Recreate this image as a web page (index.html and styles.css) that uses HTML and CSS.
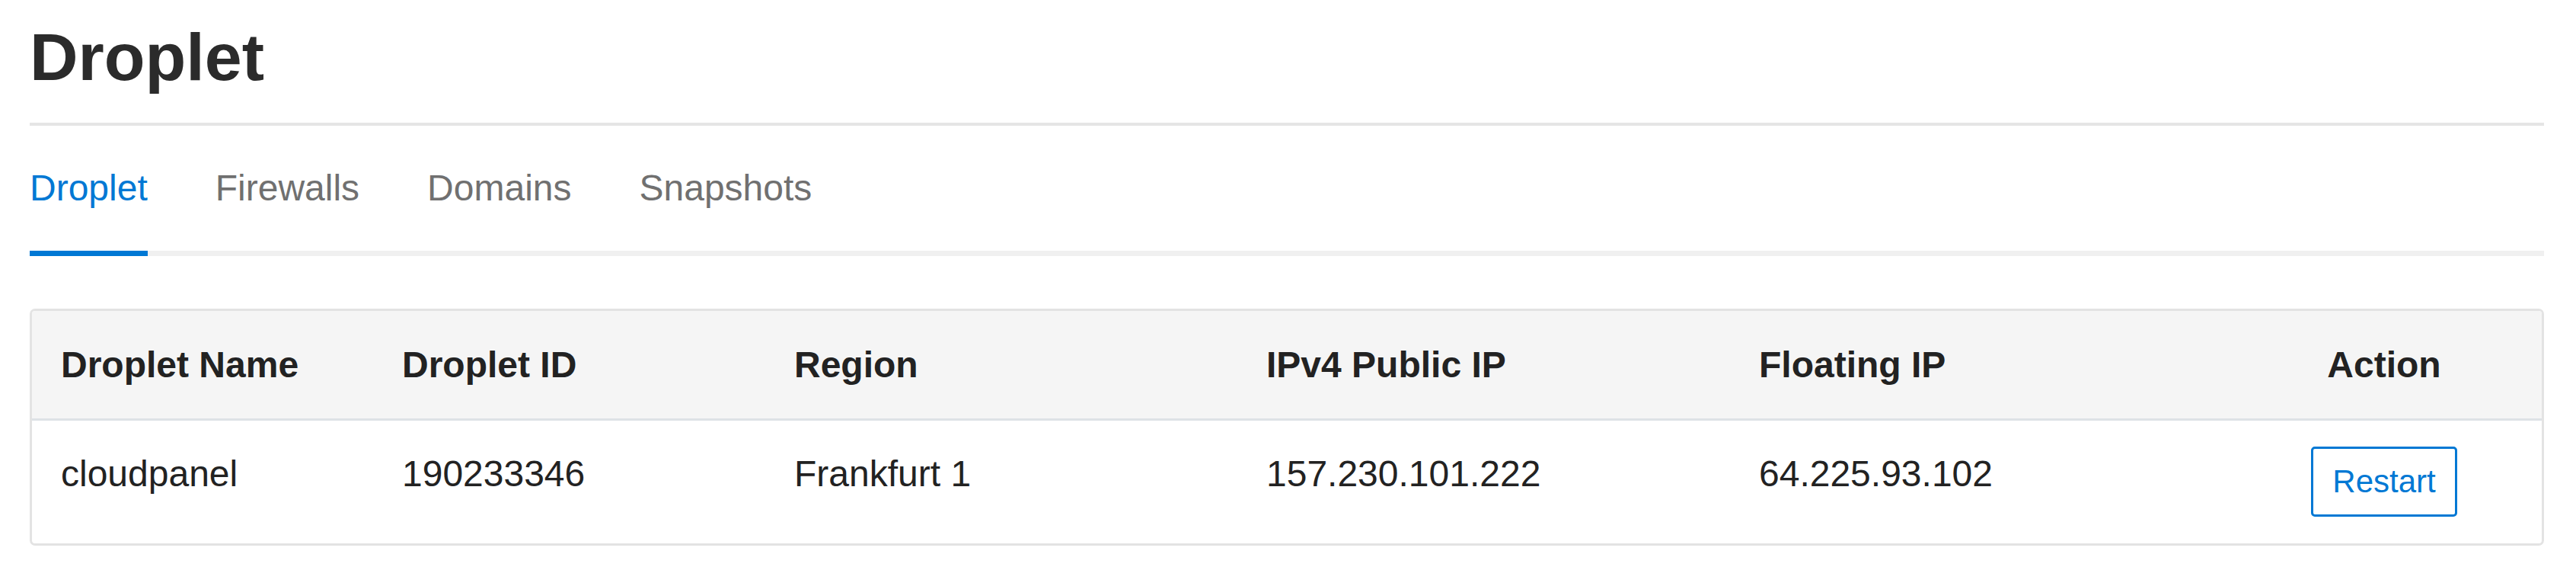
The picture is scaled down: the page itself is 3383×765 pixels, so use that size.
FILE: index.html
```html
<!DOCTYPE html>
<html lang="en">
<head>
<meta charset="utf-8">
<title>Droplet</title>
<link rel="stylesheet" href="styles.css">
</head>
<body>
<main class="page">
  <h1 class="page-title">Droplet</h1>
  <nav class="tabs">
    <a class="tab active">Droplet</a>
    <a class="tab">Firewalls</a>
    <a class="tab">Domains</a>
    <a class="tab">Snapshots</a>
  </nav>
  <div class="table-card">
    <table class="droplets">
      <colgroup>
        <col class="c-name">
        <col class="c-id">
        <col class="c-region">
        <col class="c-ip">
        <col class="c-float">
        <col class="c-action">
      </colgroup>
      <thead>
        <tr>
          <th>Droplet Name</th>
          <th>Droplet ID</th>
          <th>Region</th>
          <th>IPv4 Public IP</th>
          <th>Floating IP</th>
          <th class="center">Action</th>
        </tr>
      </thead>
      <tbody>
        <tr>
          <td>cloudpanel</td>
          <td>190233346</td>
          <td>Frankfurt 1</td>
          <td>157.230.101.222</td>
          <td>64.225.93.102</td>
          <td class="center"><button class="btn-outline" type="button">Restart</button></td>
        </tr>
      </tbody>
    </table>
  </div>
</main>
</body>
</html>
```

FILE: styles.css
```css
* { box-sizing: border-box; }

html, body {
  margin: 0;
  padding: 0;
  background: #ffffff;
}

body {
  font-family: "Liberation Sans", Arial, Helvetica, sans-serif;
  color: #212529;
}

.page {
  padding: 22px 42px 0 39px;
}

.page-title {
  margin: 0;
  font-size: 88px;
  line-height: 1.2;
  font-weight: 700;
  color: #2b2b2b;
  padding-bottom: 33px;
  border-bottom: 4px solid #e5e5e5;
}

.tabs {
  display: flex;
  gap: 89px;
  margin-top: 46px;
  border-bottom: 7px solid #f0f0f0;
}

.tab {
  font-size: 48px;
  line-height: 72px;
  color: #707070;
  padding-bottom: 46px;
  margin-bottom: -7px;
  border-bottom: 7px solid transparent;
  text-decoration: none;
}

.tab.active {
  color: #0078d4;
  border-bottom-color: #0078d4;
}

.table-card {
  margin-top: 69px;
  border: 3px solid #e3e3e3;
  border-radius: 7px;
  overflow: hidden;
}

.droplets {
  width: 100%;
  border-collapse: collapse;
  table-layout: fixed;
  font-size: 48px;
  line-height: 72px;
}

.c-name { width: 448px; }
.c-id { width: 515px; }
.c-region { width: 620px; }
.c-ip { width: 647px; }
.c-float { width: 652px; }
.c-action { width: 414px; }

.droplets th {
  background: #f5f5f5;
  font-weight: 700;
  text-align: left;
  color: #222222;
  padding: 35px 30px 34px 38px;
  vertical-align: top;
  border-bottom: 3px solid #dee2e6;
}

.droplets td {
  padding: 34px 30px 35px 38px;
  vertical-align: top;
  color: #222222;
  text-align: left;
}

.droplets .center {
  text-align: center;
  padding-left: 34px;
  padding-right: 34px;
}

.btn-outline {
  display: inline-block;
  vertical-align: top;
  font-family: "Liberation Sans", Arial, Helvetica, sans-serif;
  font-size: 42px;
  line-height: 63px;
  padding: 11px 25px 12px;
  color: #0078d4;
  background: #ffffff;
  border: 3px solid #0078d4;
  border-radius: 5px;
  cursor: pointer;
}
```
